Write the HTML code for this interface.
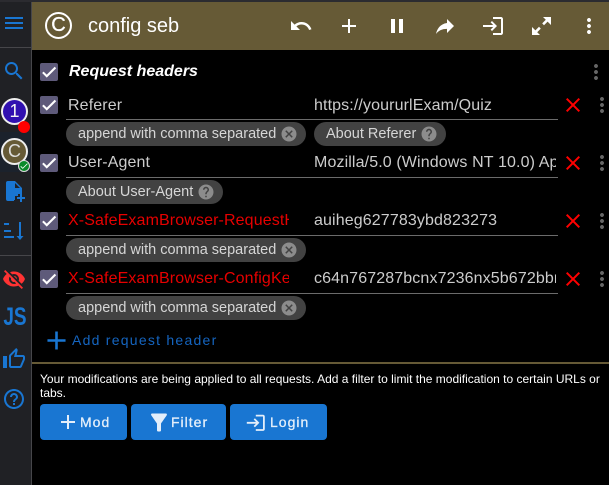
<!DOCTYPE html>
<html><head><meta charset="utf-8"><style>
html,body{margin:0;padding:0;background:#000;width:609px;height:485px;overflow:hidden;font-family:"Liberation Sans",Arial,sans-serif}
.a{position:absolute}
svg{position:absolute;display:block}
.t{position:absolute;white-space:nowrap;overflow:hidden;font-size:16px;line-height:20px;height:20px;color:#ccc;letter-spacing:.12px}
.cb{position:absolute;left:40px;width:18px;height:18px;background:#5e5a7a;border-radius:2px}
.cb svg{left:0;top:0}
.ln{position:absolute;left:66px;width:492px;height:1px;background:#6b6b6b}
.chip{position:absolute;height:24px;border-radius:12px;background:#424242;color:#d6d6d6;font-size:14.5px;line-height:24px}
.chip span{position:absolute;left:12px;top:0;white-space:nowrap}
.btn{position:absolute;top:404px;height:36px;background:#1976d2;border-radius:4px;color:#e3eefa;font-size:14px;line-height:36px;letter-spacing:1px;-webkit-text-stroke:.3px #e3eefa}
.btn span{position:absolute;top:0;white-space:nowrap}
</style></head><body>
<div class="a" style="left:0;top:0;width:31px;height:485px;background:#202125"></div>
<div class="a" style="left:31px;top:0;width:1px;height:485px;background:#46464a"></div>
<div class="a" style="left:0;top:47px;width:31px;height:1px;background:#46464a"></div>
<div class="a" style="left:0;top:255px;width:31px;height:1px;background:#46464a"></div>
<div class="a" style="left:0;top:132px;width:31px;height:40px;background:#1b222c"></div>
<div class="a" style="left:0;top:0;width:609px;height:2px;background:#2b2b30"></div>
<div class="a" style="left:32px;top:2px;width:577px;height:48px;background:#665a36"></div>

<svg style="left:2px;top:11px" width="24" height="24" viewBox="0 0 24 24" fill="#1976d2"><path d="M3 18h18v-2H3v2zm0-5h18v-2H3v2zm0-7v2h18V6H3z"/></svg>
<svg style="left:2px;top:59px" width="24" height="24" viewBox="0 0 24 24" fill="#1976d2"><path d="M15.5 14h-.79l-.28-.27C15.41 12.59 16 11.11 16 9.5 16 5.91 13.09 3 9.5 3S3 5.91 3 9.5 5.91 16 9.5 16c1.61 0 3.09-.59 4.23-1.57l.27.28v.79l5 4.99L20.49 19l-4.99-5zm-6 0C7.01 14 5 11.99 5 9.5S7.01 5 9.5 5 14 7.01 14 9.5 11.99 14 9.5 14z"/></svg>

<div class="a" style="left:1px;top:98px;width:23px;height:23px;border:2px solid #eee;border-radius:50%;background:#3010b0;color:#f2f2f2;font-size:18px;line-height:23px;text-align:center">1</div>
<div class="a" style="left:18px;top:121px;width:12px;height:12px;border-radius:50%;background:#f00"></div>
<div class="a" style="left:1px;top:138px;width:23px;height:23px;border:2px solid #eee;border-radius:50%;background:#665a36;color:#ddd;font-size:18px;line-height:23px;text-align:center">C</div>
<div class="a" style="left:18px;top:160px;width:10px;height:10px;border:1px solid #ddd;border-radius:50%;background:#0a8a2a"></div>
<svg style="left:19px;top:161px" width="10" height="10" viewBox="0 0 24 24" fill="#fff"><path d="M9 16.17L4.83 12l-1.42 1.41L9 19 21 7l-1.41-1.41z"/></svg>

<svg style="left:0;top:170px" width="32" height="80" viewBox="0 0 32 80" fill="#1976d2"><path fill-rule="evenodd" d="M8 11h7l7 7v6h-4v2h-3v4h-1v1H8a2 2 0 0 1-2-2V13a2 2 0 0 1 2-2zM15 13v5h5z"/><rect x="17" y="27" width="8" height="2"/><rect x="20" y="24" width="2" height="8"/><rect x="4" y="53" width="5" height="2"/><rect x="4" y="60" width="7" height="2"/><rect x="4" y="66" width="10" height="2"/><rect x="19" y="52" width="2" height="15"/><path d="M16.500 66h7L20 70z"/></svg>

<svg style="left:2px;top:267px" width="24" height="24" viewBox="0 0 24 24" fill="#f33"><path d="M12 7c2.760 0 5 2.240 5 5 0 .65-.13 1.260-.36 1.830l2.920 2.920c1.510-1.260 2.700-2.890 3.430-4.750-1.730-4.390-6-7.500-11-7.500-1.400 0-2.740.25-3.980.7l2.160 2.160C10.740 7.130 11.350 7 12 7zM2 4.270l2.280 2.280.46.46C3.080 8.300 1.780 10.020 1 12c1.730 4.390 6 7.500 11 7.500 1.550 0 3.030-.3 4.380-.84l.42.42L19.730 22 21 20.730 3.270 3 2 4.270zM7.530 9.800l1.550 1.550c-.05.21-.08.43-.08.65 0 1.660 1.340 3 3 3 .22 0 .44-.03.65-.08l1.550 1.550c-.67.33-1.410.53-2.200.53-2.760 0-5-2.240-5-5 0-.79.2-1.530.53-2.200zm4.310-.78l3.150 3.150.02-.16c0-1.660-1.340-3-3-3l-.17.01z"/></svg>
<div class="a" style="left:0;top:303px;width:28px;text-align:center;color:#1976d2;font-size:25px;font-weight:bold;line-height:28px;transform:scaleX(.76);transform-origin:14px 0">JS</div>
<svg style="left:2px;top:347px" width="24" height="24" viewBox="0 0 24 24" fill="#1976d2"><path d="M9 21h9c.83 0 1.540-.5 1.840-1.220l3.020-7.050c.09-.23.14-.47.14-.73v-2c0-1.100-.9-2-2-2h-6.310l.95-4.570.03-.32c0-.41-.17-.79-.44-1.060L14.170 1 7.580 7.590C7.220 7.950 7 8.450 7 9v10c0 1.100.9 2 2 2zM9 9l4.340-4.340L12 10h9v2l-3 7H9V9zM1 9h4v12H1z"/></svg>
<svg style="left:2px;top:387px" width="24" height="24" viewBox="0 0 24 24" fill="#1976d2"><path d="M11 18h2v-2h-2v2zm1-16C6.480 2 2 6.480 2 12s4.480 10 10 10 10-4.480 10-10S17.520 2 12 2zm0 18c-4.410 0-8-3.590-8-8s3.590-8 8-8 8 3.590 8 8-3.590 8-8 8zm0-14c-2.210 0-4 1.790-4 4h2c0-1.100.9-2 2-2s2 .9 2 2c0 2-3 1.750-3 5h2c0-2.250 3-2.500 3-5 0-2.210-1.790-4-4-4z"/></svg>

<div class="a" style="left:45px;top:12px;width:23px;height:23px;border:2px solid #fff;border-radius:50%;color:#fff;font-size:20px;line-height:23px;text-align:center;-webkit-text-stroke:.3px #fff">C</div>
<div class="t" style="left:88px;top:14px;height:24px;line-height:24px;font-size:20px;color:#fff;letter-spacing:0">config seb</div>

<svg style="left:289px;top:14px" width="24" height="24" viewBox="0 0 24 24" fill="#fff"><path d="M12.500 8c-2.650 0-5.050.99-6.900 2.600L2 7v9h9l-3.620-3.620c1.390-1.160 3.160-1.880 5.120-1.880 3.540 0 6.550 2.310 7.600 5.500l2.370-.78C21.080 11.030 17.150 8 12.500 8z"/></svg>
<svg style="left:337px;top:14px" width="24" height="24" viewBox="0 0 24 24" fill="#fff"><path d="M19 13h-6v6h-2v-6H5v-2h6V5h2v6h6v2z"/></svg>
<svg style="left:385px;top:14px" width="24" height="24" viewBox="0 0 24 24" fill="#fff"><path d="M6 19h4V5H6v14zm8-14v14h4V5h-4z"/></svg>
<svg style="left:433px;top:14px" width="24" height="24" viewBox="0 0 24 24" fill="#fff"><path d="M14 9V5l7 7-7 7v-4.100c-5 0-8.500 1.600-11 5.100 1-5 4-10 11-11z"/></svg>
<svg style="left:481px;top:14px" width="24" height="24" viewBox="0 0 24 24" fill="#fff"><path d="M11 7L9.600 8.400l2.600 2.600H2v2h10.200l-2.600 2.600L11 17l5-5-5-5zm9 12h-8v2h8c1.100 0 2-.9 2-2V5c0-1.100-.9-2-2-2h-8v2h8v14z"/></svg>
<svg style="left:529px;top:14px" width="24" height="24" viewBox="0 0 24 24" fill="#fff"><path d="M22 3h-8l2.800 2.800-3.600 3.600 1.800 1.800 3.600-3.600L22 11zM3 21h8l-2.800-2.800 3.600-3.600-1.800-1.800-3.600 3.600L3 13z"/></svg>
<svg style="left:577px;top:14px" width="24" height="24" viewBox="0 0 24 24" fill="#fff"><path d="M12 8c1.100 0 2-.9 2-2s-.9-2-2-2-2 .9-2 2 .9 2 2 2zm0 2c-1.100 0-2 .9-2 2s.9 2 2 2 2-.9 2-2-.9-2-2-2zm0 6c-1.100 0-2 .9-2 2s.9 2 2 2 2-.9 2-2-.9-2-2-2z"/></svg>

<div class="cb" style="top:63px"><svg width="18" height="18" viewBox="0 0 24 24" fill="#fff" stroke="#fff" stroke-width=".8"><path d="M9 16.170L4.830 12l-1.420 1.410L9 19 21 7l-1.410-1.410z"/></svg></div>
<div class="t" style="left:69px;top:62px;color:#fff;font-weight:bold;font-style:italic;letter-spacing:0">Request headers</div>
<svg style="left:584px;top:60px" width="24" height="24" viewBox="0 0 24 24" fill="#666"><path d="M12 8c1.100 0 2-.9 2-2s-.9-2-2-2-2 .9-2 2 .9 2 2 2zm0 2c-1.100 0-2 .9-2 2s.9 2 2 2 2-.9 2-2-.9-2-2-2zm0 6c-1.100 0-2 .9-2 2s.9 2 2 2 2-.9 2-2-.9-2-2-2z"/></svg>

<div class="cb" style="top:96px"><svg width="18" height="18" viewBox="0 0 24 24" fill="#fff" stroke="#fff" stroke-width=".8"><path d="M9 16.170L4.830 12l-1.420 1.410L9 19 21 7l-1.410-1.410z"/></svg></div>
<div class="t" style="left:68px;top:96px;width:221px">Referer</div>
<div class="t" style="left:314px;top:96px;width:242px">https://yoururlExam/Quiz</div>
<div class="ln" style="top:119px"></div>
<svg style="left:561px;top:93px" width="24" height="24" viewBox="0 0 24 24" fill="#f00"><path d="M19 6.410L17.590 5 12 10.590 6.410 5 5 6.410 10.590 12 5 17.590 6.410 19 12 13.410 17.590 19 19 17.590 13.410 12z"/></svg>
<svg style="left:590px;top:93px" width="24" height="24" viewBox="0 0 24 24" fill="#666"><path d="M12 8c1.100 0 2-.9 2-2s-.9-2-2-2-2 .9-2 2 .9 2 2 2zm0 2c-1.100 0-2 .9-2 2s.9 2 2 2 2-.9 2-2-.9-2-2-2zm0 6c-1.100 0-2 .9-2 2s.9 2 2 2 2-.9 2-2-.9-2-2-2z"/></svg>
<div class="chip" style="left:66px;top:122px;width:240px"><span>append with comma separated</span><svg style="left:214px;top:3px" width="18" height="18" viewBox="0 0 24 24" fill="#8c8c8c"><path d="M12 2C6.470 2 2 6.470 2 12s4.470 10 10 10 10-4.470 10-10S17.530 2 12 2zm5 13.590L15.590 17 12 13.410 8.410 17 7 15.590 10.590 12 7 8.410 8.410 7 12 10.590 15.590 7 17 8.410 13.410 12 17 15.590z"/></svg></div>
<div class="chip" style="left:314px;top:122px;width:132px"><span>About Referer</span><svg style="left:106px;top:3px" width="18" height="18" viewBox="0 0 24 24" fill="#8c8c8c"><path d="M12 2C6.480 2 2 6.480 2 12s4.480 10 10 10 10-4.480 10-10S17.520 2 12 2zm1 17h-2v-2h2v2zm2.070-7.750l-.9.92C13.450 12.900 13 13.500 13 15h-2v-.5c0-1.100.45-2.100 1.170-2.830l1.240-1.260c.37-.36.59-.86.59-1.410 0-1.100-.9-2-2-2s-2 .9-2 2H8c0-2.210 1.790-4 4-4s4 1.790 4 4c0 .88-.36 1.680-.93 2.250z"/></svg></div>

<div class="cb" style="top:154px"><svg width="18" height="18" viewBox="0 0 24 24" fill="#fff" stroke="#fff" stroke-width=".8"><path d="M9 16.170L4.830 12l-1.420 1.410L9 19 21 7l-1.410-1.410z"/></svg></div>
<div class="t" style="left:68px;top:153px;width:221px">User-Agent</div>
<div class="t" style="left:314px;top:153px;width:242px">Mozilla/5.0 (Windows NT 10.0) AppleWebKit</div>
<div class="ln" style="top:177px"></div>
<svg style="left:561px;top:151px" width="24" height="24" viewBox="0 0 24 24" fill="#f00"><path d="M19 6.410L17.590 5 12 10.590 6.410 5 5 6.410 10.590 12 5 17.590 6.410 19 12 13.410 17.590 19 19 17.590 13.410 12z"/></svg>
<svg style="left:590px;top:151px" width="24" height="24" viewBox="0 0 24 24" fill="#666"><path d="M12 8c1.100 0 2-.9 2-2s-.9-2-2-2-2 .9-2 2 .9 2 2 2zm0 2c-1.100 0-2 .9-2 2s.9 2 2 2 2-.9 2-2-.9-2-2-2zm0 6c-1.100 0-2 .9-2 2s.9 2 2 2 2-.9 2-2-.9-2-2-2z"/></svg>
<div class="chip" style="left:66px;top:180px;width:157px"><span>About User-Agent</span><svg style="left:131px;top:3px" width="18" height="18" viewBox="0 0 24 24" fill="#8c8c8c"><path d="M12 2C6.480 2 2 6.480 2 12s4.480 10 10 10 10-4.480 10-10S17.520 2 12 2zm1 17h-2v-2h2v2zm2.070-7.750l-.9.92C13.450 12.900 13 13.500 13 15h-2v-.5c0-1.100.45-2.100 1.170-2.830l1.240-1.260c.37-.36.59-.86.59-1.410 0-1.100-.9-2-2-2s-2 .9-2 2H8c0-2.210 1.790-4 4-4s4 1.790 4 4c0 .88-.36 1.680-.93 2.250z"/></svg></div>

<div class="cb" style="top:212px"><svg width="18" height="18" viewBox="0 0 24 24" fill="#fff" stroke="#fff" stroke-width=".8"><path d="M9 16.170L4.830 12l-1.420 1.410L9 19 21 7l-1.410-1.410z"/></svg></div>
<div class="t" style="left:68px;top:211px;width:221px;color:#e60000">X-SafeExamBrowser-RequestHash</div>
<div class="t" style="left:314px;top:211px;width:242px">auiheg627783ybd823273</div>
<div class="ln" style="top:235px"></div>
<svg style="left:561px;top:209px" width="24" height="24" viewBox="0 0 24 24" fill="#f00"><path d="M19 6.410L17.590 5 12 10.590 6.410 5 5 6.410 10.590 12 5 17.590 6.410 19 12 13.410 17.590 19 19 17.590 13.410 12z"/></svg>
<svg style="left:590px;top:209px" width="24" height="24" viewBox="0 0 24 24" fill="#666"><path d="M12 8c1.100 0 2-.9 2-2s-.9-2-2-2-2 .9-2 2 .9 2 2 2zm0 2c-1.100 0-2 .9-2 2s.9 2 2 2 2-.9 2-2-.9-2-2-2zm0 6c-1.100 0-2 .9-2 2s.9 2 2 2 2-.9 2-2-.9-2-2-2z"/></svg>
<div class="chip" style="left:66px;top:238px;width:240px"><span>append with comma separated</span><svg style="left:214px;top:3px" width="18" height="18" viewBox="0 0 24 24" fill="#8c8c8c"><path d="M12 2C6.470 2 2 6.470 2 12s4.470 10 10 10 10-4.470 10-10S17.530 2 12 2zm5 13.590L15.590 17 12 13.410 8.410 17 7 15.590 10.590 12 7 8.410 8.410 7 12 10.590 15.590 7 17 8.410 13.410 12 17 15.590z"/></svg></div>

<div class="cb" style="top:270px"><svg width="18" height="18" viewBox="0 0 24 24" fill="#fff" stroke="#fff" stroke-width=".8"><path d="M9 16.170L4.830 12l-1.420 1.410L9 19 21 7l-1.410-1.410z"/></svg></div>
<div class="t" style="left:68px;top:269px;width:221px;color:#e60000">X-SafeExamBrowser-ConfigKeyHash</div>
<div class="t" style="left:314px;top:269px;width:242px">c64n767287bcnx7236nx5b672bbn8273</div>
<div class="ln" style="top:293px"></div>
<svg style="left:561px;top:267px" width="24" height="24" viewBox="0 0 24 24" fill="#f00"><path d="M19 6.410L17.590 5 12 10.590 6.410 5 5 6.410 10.590 12 5 17.590 6.410 19 12 13.410 17.590 19 19 17.590 13.410 12z"/></svg>
<svg style="left:590px;top:267px" width="24" height="24" viewBox="0 0 24 24" fill="#666"><path d="M12 8c1.100 0 2-.9 2-2s-.9-2-2-2-2 .9-2 2 .9 2 2 2zm0 2c-1.100 0-2 .9-2 2s.9 2 2 2 2-.9 2-2-.9-2-2-2zm0 6c-1.100 0-2 .9-2 2s.9 2 2 2 2-.9 2-2-.9-2-2-2z"/></svg>
<div class="chip" style="left:66px;top:296px;width:240px"><span>append with comma separated</span><svg style="left:214px;top:3px" width="18" height="18" viewBox="0 0 24 24" fill="#8c8c8c"><path d="M12 2C6.470 2 2 6.470 2 12s4.470 10 10 10 10-4.470 10-10S17.530 2 12 2zm5 13.590L15.590 17 12 13.410 8.410 17 7 15.590 10.590 12 7 8.410 8.410 7 12 10.590 15.590 7 17 8.410 13.410 12 17 15.590z"/></svg></div>

<svg style="left:40.500px;top:324.500px" width="31" height="31" viewBox="0 0 24 24" fill="#1976d2"><path d="M19 13h-6v6h-2v-6H5v-2h6V5h2v6h6v2z"/></svg>
<div class="t" style="left:72px;top:330px;font-size:14px;letter-spacing:1.250px;color:#1565c0">Add request header</div>

<div class="a" style="left:32px;top:362px;width:577px;height:2px;background:#665a36"></div>
<div class="a" style="left:40px;top:372px;width:565px;font-size:12px;line-height:14px;color:#fff">Your modifications are being applied to all requests. Add a filter to limit the modification to certain URLs or tabs.</div>

<div class="btn" style="left:40px;width:87px"><svg style="left:16px;top:6px" width="24" height="24" viewBox="0 0 24 24" fill="#e3eefa"><path d="M19 13h-6v6h-2v-6H5v-2h6V5h2v6h6v2z"/></svg><span style="left:40px">Mod</span></div>
<div class="btn" style="left:131px;width:95px"><svg style="left:16px;top:4.500px" width="24" height="27" viewBox="0 0 24 24" preserveAspectRatio="none" fill="#e3eefa"><path d="M4.250 5.610C6.270 8.200 10 13 10 13v6c0 .55.45 1 1 1h2c.55 0 1-.45 1-1v-6s3.720-4.800 5.740-7.390C20.250 4.950 19.780 4 18.950 4H5.040c-.83 0-1.300.95-.79 1.610z"/></svg><span style="left:40px">Filter</span></div>
<div class="btn" style="left:230px;width:97px"><svg style="left:15px;top:7.500px" width="21.600" height="21.600" viewBox="0 0 24 24" fill="#e3eefa"><path d="M11 7L9.600 8.400l2.600 2.600H2v2h10.200l-2.600 2.600L11 17l5-5-5-5zm9 12h-8v2h8c1.100 0 2-.9 2-2V5c0-1.100-.9-2-2-2h-8v2h8v14z"/></svg><span style="left:40px">Login</span></div>
</body></html>
